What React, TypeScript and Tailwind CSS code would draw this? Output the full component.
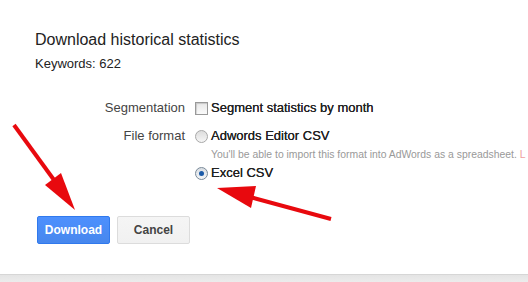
import React from "react";

export default function App() {
  return (
    <div className="relative w-[528px] h-[282px] bg-white overflow-hidden flex flex-col" style={{ fontFamily: '"Liberation Sans", Arial, sans-serif' }}>
      <div className="flex-1 pl-[35px] pt-[30px]">
        <div className="text-[16px] leading-[19px] text-[#222]">Download historical statistics</div>
        <div className="mt-[7px] text-[13px] leading-[16px] text-[#222]">Keywords: 622</div>

        <div className="mt-[27px] grid grid-cols-[150px_1fr] gap-x-[10px] text-[13px]">
          <div className="text-right text-[#444] leading-[18px]">Segmentation</div>
          <div className="flex items-center gap-[3px] leading-[18px]">
            <span className="inline-block w-[13px] h-[13px] border border-[#999] bg-gradient-to-b from-[#e8e8e8] to-[#fafafa] shadow-[inset_1px_1px_1px_rgba(0,0,0,0.15)]" />
            <span className="text-[#222] [text-shadow:0_0_0.4px_#222]">Segment statistics by month</span>
          </div>

          <div className="mt-[10px] text-right text-[#444] leading-[18px]">File format</div>
          <div className="mt-[10px] flex flex-col">
            <div className="flex items-center gap-[3px] leading-[18px]">
              <span className="inline-block w-[13px] h-[13px] rounded-full border border-[#a8a8a8] bg-gradient-to-b from-[#dcdcdc] to-[#f6f6f6]" />
              <span className="text-[#222] [text-shadow:0_0_0.4px_#222]">Adwords Editor CSV</span>
            </div>
            <div className="pl-[16px] mt-[3px] text-[10.4px] leading-[13px] text-[#999] whitespace-nowrap">
              You'll be able to import this format into AdWords as a spreadsheet. <span className="text-[#f0a0a0]">L</span>
            </div>
            <div className="mt-[3px] flex items-center gap-[3px] leading-[18px]">
              <span className="relative inline-flex items-center justify-center w-[13px] h-[13px] rounded-full border border-[#7a8a99] bg-gradient-to-b from-[#d8dde2] to-[#f4f6f8]">
                <span className="w-[5px] h-[5px] rounded-full bg-[#1a5aa8]" />
              </span>
              <span className="text-[#222] [text-shadow:0_0_0.4px_#222]">Excel CSV</span>
            </div>
          </div>
        </div>

        <div className="mt-[34px] flex gap-[7px] pl-[2px]">
          <button className="w-[73px] h-[28px] rounded-[2px] border border-[#3079ed] bg-gradient-to-b from-[#4d90fe] to-[#4787ed] text-white text-[12px] font-bold">Download</button>
          <button className="w-[73px] h-[28px] rounded-[2px] border border-[#dcdcdc] bg-gradient-to-b from-[#f5f5f5] to-[#f1f1f1] text-[#444] text-[12px] font-bold">Cancel</button>
        </div>
      </div>
      <div className="h-[8px] border-t border-[#d6d6d6] bg-gradient-to-b from-[#e4e4e4] to-[#ececec]" />

      <svg className="absolute left-0 top-0 pointer-events-none" width="528" height="282">
        <line x1="14" y1="125" x2="54" y2="180" stroke="#e8090e" strokeWidth="4" />
        <polygon points="45,185 61,173 75,210" fill="#e8090e" />
        <line x1="250" y1="197" x2="331" y2="219" stroke="#e8090e" strokeWidth="4" />
        <polygon points="217,188 256,186 251,208" fill="#e8090e" />
      </svg>
    </div>
  );
}
